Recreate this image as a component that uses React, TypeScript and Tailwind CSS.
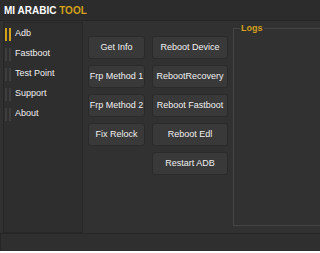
import React, { useState } from "react";

const sideItems = ["Adb", "Fastboot", "Test Point", "Support", "About"];

const leftButtons = ["Get Info", "Frp Method 1", "Frp Method 2", "Fix Relock"];
const rightButtons = [
  "Reboot Device",
  "RebootRecovery",
  "Reboot Fastboot",
  "Reboot Edl",
  "Restart ADB",
];

function ToolButton({ label, width }: { label: string; width: string }) {
  return (
    <button
      className={`${width} flex h-[23px] items-center justify-center rounded-[3px] border border-[#2a2a2a] bg-[#393939] text-[9px] text-[#f0f0f0]`}
    >
      {label}
    </button>
  );
}

export default function App() {
  const [active, setActive] = useState("Adb");

  return (
    <div
      className="flex h-[251px] w-[320px] flex-col overflow-hidden bg-[#313131]"
      style={{ fontFamily: '"Liberation Sans", Arial, sans-serif' }}
    >
      {/* title bar */}
      <div className="flex h-[21px] shrink-0 items-center border-b border-[#252525] bg-[#2c2c2c] pl-[4px]">
        <span className="text-[10px] font-bold text-white">
          MI ARABIC <span className="text-[#d4a11a]">TOOL</span>
        </span>
      </div>

      <div className="flex flex-1">
        {/* side menu */}
        <div className="ml-[3px] mt-[1px] flex h-[211px] w-[80px] shrink-0 flex-col border border-[#272727] bg-[#2e2e2e] pt-[1px]">
          {sideItems.map((item) => {
            const isActive = item === active;
            return (
              <button
                key={item}
                onClick={() => setActive(item)}
                className="flex h-[20px] items-center text-left"
              >
                <span className="ml-[1px] flex h-[13px] gap-[2px]">
                  <span
                    className={`w-[2px] ${isActive ? "bg-[#d4a11a]" : "bg-[#3d3d3d]"}`}
                  />
                  <span
                    className={`w-[2px] ${isActive ? "bg-[#d4a11a]" : "bg-[#3d3d3d]"}`}
                  />
                </span>
                <span className="ml-[4px] text-[9px] text-[#f0f0f0]">{item}</span>
              </button>
            );
          })}
        </div>

        {/* main */}
        <div className="flex flex-1 pl-[5px]">
          <div className="flex gap-[7px] pt-[15px]">
            <div className="flex flex-col gap-[6px]">
              {leftButtons.map((b) => (
                <ToolButton key={b} label={b} width="w-[57px]" />
              ))}
            </div>
            <div className="flex flex-col gap-[6px]">
              {rightButtons.map((b) => (
                <ToolButton key={b} label={b} width="w-[76px]" />
              ))}
            </div>
          </div>

          <fieldset className="ml-[5px] mt-[1px] h-[204px] flex-1 border border-r-0 border-[#444444]">
            <legend className="ml-[6px] px-[1px] text-[9px] font-bold text-[#d4a11a]">
              Logs
            </legend>
          </fieldset>
        </div>
      </div>

      {/* status strip */}
      <div className="h-[18px] shrink-0 border-l border-t border-[#262626] bg-[#2f2f2f]" />
    </div>
  );
}
